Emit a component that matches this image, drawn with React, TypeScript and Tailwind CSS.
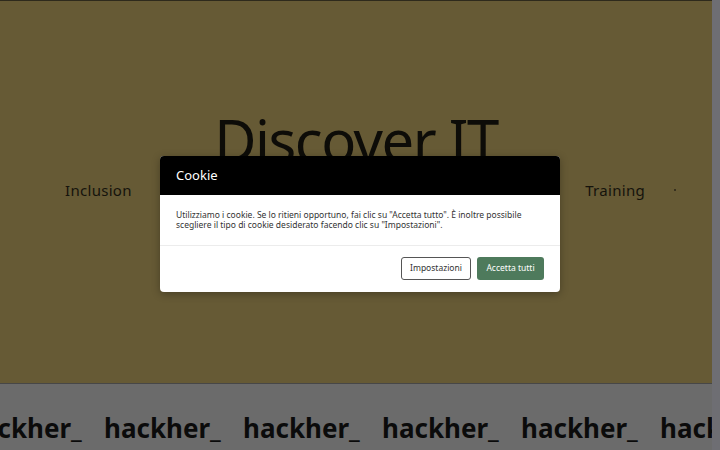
import React from "react";

export default function App() {
  const items = Array.from({ length: 7 });
  return (
    <div
      className="relative w-[720px] h-[450px] overflow-hidden bg-[#665a35]"
      style={{ fontFamily: '"Noto Sans", "Open Sans", sans-serif' }}
    >
      <div className="flex h-full">
        <div className="w-[712px] min-w-0 overflow-hidden flex flex-col">
          <div className="h-[1px] bg-[#2e2a1c]" />
          <div className="h-[382px] bg-[#665a35] relative flex flex-col items-center">
            <div className="mt-[110px] text-[58px] leading-none text-[#0d0c08] tracking-[-1.5px]">
              Discover IT
            </div>
            <div className="w-full flex justify-between items-center pl-[65px] pr-[36px] mt-[10px] text-[15px] text-[#15130c]">
              <span className="tracking-[0.3px]">Inclusion</span>
              <div className="flex items-center gap-[29px]">
                <span className="tracking-[0.3px]">Training</span>
                <span className="w-[2px] h-[2px] rounded-full bg-[#2a2518]" />
              </div>
            </div>
          </div>
          <div className="h-[1px] bg-[#474747]" />
          <div className="flex-1 bg-[#6b6b6b] flex items-center pt-[22px] overflow-hidden">
            <div className="flex gap-[24px] ml-[-35px] shrink-0">
              {items.map((_, i) => (
                <span
                  key={i}
                  className="text-[26px] font-bold text-[#0b0b0b] leading-none whitespace-nowrap w-[115px]"
                >
                  hackher_
                </span>
              ))}
            </div>
          </div>
        </div>
        <div className="w-[8px] h-full bg-[#6e6e73]" />
      </div>

      <div className="absolute left-[160px] top-[156px] w-[400px] rounded-[4px] bg-white overflow-hidden shadow-[0_2px_8px_rgba(0,0,0,0.3)]">
        <div className="h-[39px] bg-black flex items-center px-[16px]">
          <span className="text-white text-[13px]">Cookie</span>
        </div>
        <div className="px-[16px] pt-[15px] pb-[15px] text-[8.5px] leading-[10px] text-[#333333]">
          Utilizziamo i cookie. Se lo ritieni opportuno, fai clic su "Accetta tutto". È inoltre possibile
          scegliere il tipo di cookie desiderato facendo clic su "Impostazioni".
        </div>
        <div className="h-[1px] bg-[#ececec]" />
        <div className="flex justify-end gap-[6px] px-[16px] pt-[11px] pb-[12px]">
          <button className="h-[23px] w-[70px] rounded-[3px] border border-[#555] bg-white text-[8.5px] text-[#333]">
            Impostazioni
          </button>
          <button className="h-[23px] w-[67px] rounded-[3px] bg-[#4e7a5c] text-[8.5px] text-white">
            Accetta tutti
          </button>
        </div>
      </div>
    </div>
  );
}
